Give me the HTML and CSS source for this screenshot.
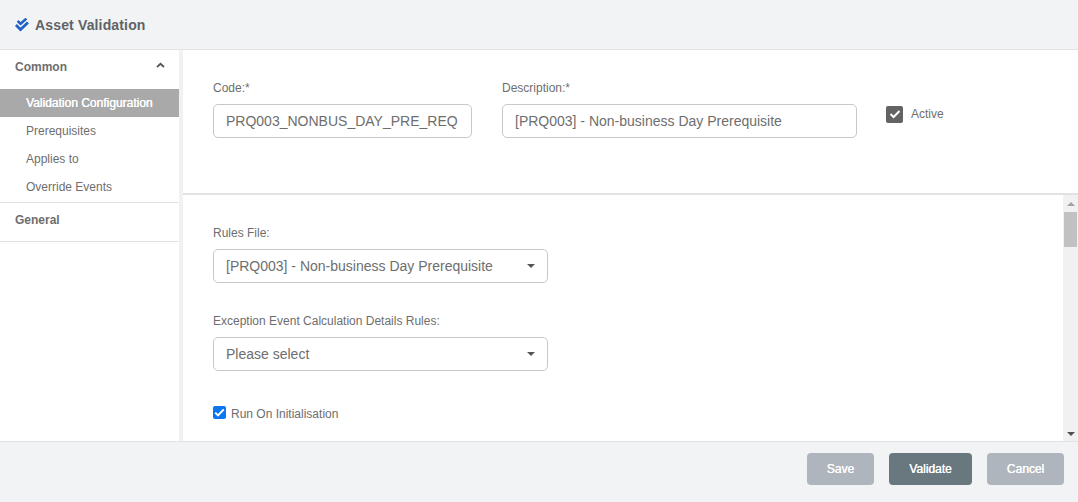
FILE: index.html
```html
<!DOCTYPE html>
<html>
<head>
    <title>Asset Validation</title>
    <link rel="stylesheet" href="styles.css">
</head>
<body>
    <header class="top-bar">
        <svg class="logo" width="14" height="14" viewBox="0 0 14 14">
            <path d="M2.6 3 L5.6 5.8 L11.4 0.6" fill="none" stroke="#2160c4" stroke-width="2.5"/>
            <path d="M0.9 7 L5.5 11.6 L13 4.4" fill="none" stroke="#2160c4" stroke-width="2.8"/>
        </svg>
        <span class="title">Asset Validation</span>
    </header>

    <div class="main">
        <nav class="side">
            <div class="group">
                <div class="group-head">
                    <span>Common</span>
                    <svg class="chev" width="9" height="6" viewBox="0 0 9 6">
                        <path d="M1 5 L4.5 1.8 L8 5" fill="none" stroke="#555" stroke-width="1.8"/>
                    </svg>
                </div>
                <a class="item selected">Validation Configuration</a>
                <a class="item">Prerequisites</a>
                <a class="item">Applies to</a>
                <a class="item">Override Events</a>
            </div>
            <div class="group general">
                <div class="group-head"><span>General</span></div>
            </div>
        </nav>

        <section class="content">
            <div class="head-form">
                <div class="field code-field">
                    <label>Code:*</label>
                    <div class="input">PRQ003_NONBUS_DAY_PRE_REQ</div>
                </div>
                <div class="field desc-field">
                    <label>Description:*</label>
                    <div class="input">[PRQ003] - Non-business Day Prerequisite</div>
                </div>
                <div class="active">
                    <span class="check-box">
                        <svg width="12" height="10" viewBox="0 0 12 10">
                            <path d="M1.5 5 L4.6 8 L10.5 2" fill="none" stroke="#fff" stroke-width="2"/>
                        </svg>
                    </span>
                    <span>Active</span>
                </div>
            </div>

            <div class="scroll-area">
                <div class="form-body">
                    <div class="field select-field">
                        <label>Rules File:</label>
                        <div class="input select">
                            <span>[PRQ003] - Non-business Day Prerequisite</span>
                            <i class="caret"></i>
                        </div>
                    </div>
                    <div class="field select-field">
                        <label>Exception Event Calculation Details Rules:</label>
                        <div class="input select">
                            <span>Please select</span>
                            <i class="caret"></i>
                        </div>
                    </div>
                    <div class="run-on">
                        <span class="blue-check">
                            <svg width="11" height="9" viewBox="0 0 11 9">
                                <path d="M1.2 4.6 L4 7.4 L9.8 1.4" fill="none" stroke="#fff" stroke-width="2"/>
                            </svg>
                        </span>
                        <span>Run On Initialisation</span>
                    </div>
                </div>
                <div class="scrollbar">
                    <i class="arrow-up"></i>
                    <div class="thumb"></div>
                    <div class="track"></div>
                    <i class="arrow-down"></i>
                </div>
            </div>
        </section>
    </div>

    <footer class="bottom-bar">
        <button class="btn muted save">Save</button>
        <button class="btn primary">Validate</button>
        <button class="btn muted">Cancel</button>
    </footer>
</body>
</html>
```

FILE: styles.css
```css
* {
    box-sizing: border-box;
}
html, body {
    height: 100%;
}
body {
    margin: 0;
    font-family: "Liberation Sans", Arial, sans-serif;
    font-size: 12px;
    color: #6e6e6e;
    background-color: #fff;
    display: flex;
    flex-direction: column;
    overflow: hidden;
}
.top-bar {
    height: 50px;
    flex: none;
    display: flex;
    align-items: center;
    padding-left: 15px;
    background-color: #f2f3f5;
    border-bottom: 1px solid #e2e2e2;
}
.logo {
    margin-right: 6px;
}
.title {
    font-size: 14px;
    font-weight: bold;
    color: #5f6368;
    letter-spacing: 0.15px;
}
.main {
    flex: 1;
    min-height: 0;
    display: flex;
}
.side {
    width: 183px;
    flex: none;
    background-color: #fff;
    border-right: 4px solid #f1f1f1;
}
.group {
    border-bottom: 1px solid #e2e2e2;
    padding-bottom: 1px;
}
.group-head {
    height: 39px;
    display: flex;
    align-items: center;
    justify-content: space-between;
    padding: 0 14px 5px 15px;
    font-weight: bold;
    color: #6e6e6e;
}
.chev {
    margin-top: -4px;
}
.general {
    height: 39px;
}
.general .group-head {
    height: 34px;
    padding-bottom: 0;
}
.item {
    display: block;
    height: 28px;
    line-height: 28px;
    padding-left: 26px;
    color: #6e6e6e;
}
.item.selected {
    background-color: #a9a9a9;
    color: #fff;
    text-shadow: 0.3px 0 0 #fff;
}
.content {
    flex: 1;
    min-width: 0;
    display: flex;
    flex-direction: column;
}
.head-form {
    height: 145px;
    flex: none;
    display: flex;
    padding: 31px 0 0 30px;
    border-bottom: 2px solid #e2e2e2;
}
.field label {
    display: block;
    height: 14px;
    line-height: 14px;
    margin-bottom: 9px;
    color: #6e6e6e;
}
.input {
    height: 34px;
    line-height: 32px;
    padding: 0 12px;
    border: 1px solid #c8c8c8;
    border-radius: 5px;
    font-size: 14px;
    color: #6e6e6e;
    white-space: nowrap;
    overflow: hidden;
    background-color: #fff;
}
.code-field {
    width: 259px;
    margin-right: 30px;
}
.desc-field {
    width: 355px;
    margin-right: 29px;
}
.active {
    display: flex;
    align-items: center;
    height: 34px;
    margin-top: 16px;
    gap: 8px;
}
.check-box {
    width: 17px;
    height: 17px;
    border-radius: 2px;
    background-color: #636363;
    display: flex;
    align-items: center;
    justify-content: center;
}
.scroll-area {
    flex: 1;
    min-height: 0;
    display: flex;
}
.form-body {
    flex: 1;
    min-width: 0;
    padding: 31px 0 0 30px;
}
.select-field {
    width: 335px;
    margin-bottom: 31px;
}
.select {
    display: flex;
    align-items: center;
    justify-content: space-between;
    padding-right: 12px;
}
.caret {
    width: 0;
    height: 0;
    border-left: 4px solid transparent;
    border-right: 4px solid transparent;
    border-top: 4px solid #555;
}
.select-field + .select-field {
    margin-bottom: 36px;
}
.run-on {
    display: flex;
    align-items: center;
    gap: 5px;
}
.blue-check {
    width: 13px;
    height: 13px;
    margin-top: -3px;
    border-radius: 2px;
    background-color: #0b76f2;
    display: flex;
    align-items: center;
    justify-content: center;
}
.scrollbar {
    width: 15px;
    flex: none;
    background-color: #f1f1f1;
    display: flex;
    flex-direction: column;
    align-items: center;
}
.arrow-up, .arrow-down {
    width: 0;
    height: 0;
    flex: none;
    border-left: 4px solid transparent;
    border-right: 4px solid transparent;
}
.arrow-up {
    margin: 7px 0 6px;
    border-bottom: 4px solid #a3a3a3;
}
.arrow-down {
    margin: 0 0 5px;
    border-top: 4px solid #505050;
}
.thumb {
    width: 13px;
    height: 35px;
    flex: none;
    background-color: #c1c1c1;
}
.track {
    flex: 1;
}
.bottom-bar {
    height: 61px;
    flex: none;
    display: flex;
    justify-content: flex-end;
    align-items: flex-start;
    padding: 11px 14px 0 0;
    background-color: #f2f3f5;
    border-top: 1px solid #e2e2e2;
}
.btn {
    height: 32px;
    border: none;
    border-radius: 4px;
    color: #fff;
    font-family: inherit;
    font-size: 12px;
    text-shadow: 0.3px 0 0 #fff;
    cursor: pointer;
}
.muted {
    width: 77px;
    background-color: #aeb5bc;
}
.primary {
    width: 83px;
    margin: 0 15px;
    background-color: #69777f;
}
.save {
    width: 67px;
}
```
